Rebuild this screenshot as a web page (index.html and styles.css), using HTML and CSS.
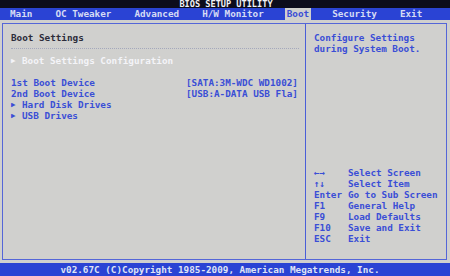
FILE: index.html
```html
<!DOCTYPE html>
<html>
  <head>
    <meta charset="UTF-8" />
    <title>BIOS Setup Utility</title>
    <link rel="stylesheet" href="styles.css">
  </head>
  <body>
    <header class="title-bar">BIOS SETUP UTILITY</header>
    <nav class="menu-bar">
      <span class="menu-item">Main</span>
      <span class="menu-item">OC Tweaker</span>
      <span class="menu-item">Advanced</span>
      <span class="menu-item">H/W Monitor</span>
      <span class="menu-item active">Boot</span>
      <span class="menu-item">Security</span>
      <span class="menu-item">Exit</span>
    </nav>

    <main class="frame">
      <section class="left-pane">
        <div class="pane-title">Boot Settings</div>
        <div class="row selected"><span class="arrow">&#9654;</span>Boot Settings Configuration</div>

        <div class="options">
          <div class="row">
            <span class="label">1st Boot Device</span>
            <span class="value">[SATA:3M-WDC WD1002]</span>
          </div>
          <div class="row">
            <span class="label">2nd Boot Device</span>
            <span class="value">[USB:A-DATA USB Fla]</span>
          </div>
          <div class="row"><span class="arrow">&#9654;</span>Hard Disk Drives</div>
          <div class="row"><span class="arrow">&#9654;</span>USB Drives</div>
        </div>
      </section>

      <aside class="right-pane">
        <div class="help-text">
          Configure Settings<br>
          during System Boot.
        </div>

        <div class="keys">
          <div class="key-row"><span class="key">&larr;&rarr;</span>Select Screen</div>
          <div class="key-row"><span class="key">&uarr;&darr;</span>Select Item</div>
          <div class="key-row"><span class="key">Enter</span>Go to Sub Screen</div>
          <div class="key-row"><span class="key">F1</span>General Help</div>
          <div class="key-row"><span class="key">F9</span>Load Defaults</div>
          <div class="key-row"><span class="key">F10</span>Save and Exit</div>
          <div class="key-row"><span class="key">ESC</span>Exit</div>
        </div>
      </aside>
    </main>

    <footer class="footer-bar">v02.67C (C)Copyright 1985-2009, American Megatrends, Inc.</footer>
  </body>
</html>
```

FILE: styles.css
```css
body {
  margin: 0;
  width: 450px;
  height: 276px;
  overflow: hidden;
  display: flex;
  flex-direction: column;
  background-color: #d0d0ce;
  font-family: "DejaVu Sans Mono", "Liberation Mono", monospace;
  font-weight: bold;
  font-size: 9.3px;
  line-height: 11px;
  color: #3a4ed6;
}

.title-bar {
  height: 8px;
  background-color: #0c0c1c;
  color: #f2f2f6;
  text-align: center;
  font-size: 8.6px;
  line-height: 8px;
  padding-left: 2px;
}

.menu-bar {
  height: 12px;
  background-color: #2a43d4;
  display: flex;
  gap: 19px;
  padding-left: 8px;
  align-items: stretch;
}

.menu-item {
  padding: 0 2px;
  line-height: 12px;
  color: #d6dcf4;
}

.menu-item.active {
  background-color: #d0d0ce;
  color: #3a4ed6;
}

.frame {
  flex: 1;
  display: flex;
  margin: 3px 3px 3px 2px;
  border: 1px solid #5466d8;
}

.left-pane {
  width: 294px;
  padding: 8px 0 0 8px;
  border-right: 1px solid #4a5ed8;
}

.pane-title {
  color: #2c2c3a;
  padding-bottom: 5px;
  margin-right: 6px;
  border-bottom: 1px dotted #a4a8bc;
  margin-bottom: 6px;
}

.row {
  display: flex;
}

.row.selected {
  color: #f4f4f8;
}

.arrow {
  width: 11px;
  font-size: 7.5px;
}

.options {
  margin-top: 11px;
}

.label {
  width: 175px;
}

.right-pane {
  flex: 1;
  display: flex;
  flex-direction: column;
  padding: 8px 0 15px 8px;
}

.keys {
  margin-top: auto;
}

.key-row {
  display: flex;
}

.key {
  width: 34px;
}

.footer-bar {
  height: 13px;
  background-color: #2a43d4;
  color: #dfe3f6;
  text-align: center;
  line-height: 14px;
  padding-right: 10px;
}
```
